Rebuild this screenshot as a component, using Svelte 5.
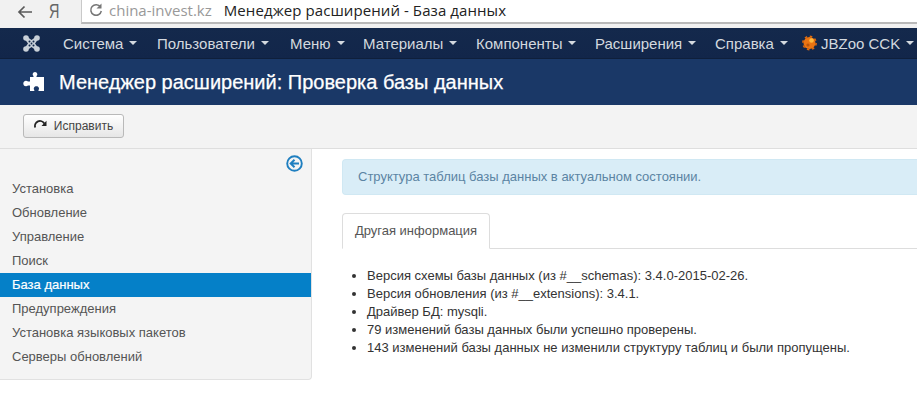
<script>
  const navItems = [
    { label: 'Система', width: 94 },
    { label: 'Пользователи', width: 133 },
    { label: 'Меню', width: 73 },
    { label: 'Материалы', width: 113 },
    { label: 'Компоненты', width: 119 },
    { label: 'Расширения', width: 120 },
    { label: 'Справка', width: 87 }
  ];
  const sideItems = ['Установка', 'Обновление', 'Управление', 'Поиск', 'База данных', 'Предупреждения', 'Установка языковых пакетов', 'Серверы обновлений'];
  const info = [
    'Версия схемы базы данных (из #__schemas): 3.4.0-2015-02-26.',
    'Версия обновления (из #__extensions): 3.4.1.',
    'Драйвер БД: mysqli.',
    '79 изменений базы данных были успешно проверены.',
    '143 изменений базы данных не изменили структуру таблиц и были пропущены.'
  ];
</script>

<div class="page">
  <div class="browser">
    <div class="browser-left">
      <svg class="back" width="16" height="14" viewBox="0 0 16 14"><path d="M15 7H2M7.500 1.500 2 7l5.500 5.500" fill="none" stroke="#5a5a5a" stroke-width="1.700"/></svg>
      <span class="ya">Я</span>
    </div>
    <div class="url">
      <svg class="reload" width="14" height="14" viewBox="0 0 14 14"><path d="M11.500 4A5.300 5.300 0 1 0 12.300 8" fill="none" stroke="#777" stroke-width="1.500"/><path d="M12.500 .5V5.500H7.500z" fill="#777"/></svg>
      <span class="host">china-invest.kz</span>
      <span class="doc-title">Менеджер расширений - База данных</span>
    </div>
  </div>

  <nav class="nav">
    <svg class="logo" width="17" height="17" viewBox="0 0 17 17">
      <g fill="#c9d0d8">
        <circle cx="3" cy="3" r="2.800"/><circle cx="14" cy="3" r="2.800"/><circle cx="3" cy="14" r="2.800"/><circle cx="14" cy="14" r="2.800"/>
        <path d="M3 1 8.500 5 14 1 16 3 12 8.500 16 14 14 16 8.500 12 3 16 1 14 5 8.500 1 3Z"/>
      </g>
      <g fill="#13294a">
        <circle cx="6.500" cy="6.500" r="1"/><circle cx="10.500" cy="6.500" r="1"/><circle cx="6.500" cy="10.500" r="1"/><circle cx="10.500" cy="10.500" r="1"/><circle cx="8.500" cy="8.500" r=".9"/>
      </g>
    </svg>
    <ul class="menu">
      {#each navItems as item}
        <li class="menu-item" style="width:{item.width}px"><span>{item.label}</span><i class="caret"></i></li>
      {/each}
      <li class="menu-item zoo">
        <svg width="15" height="16" viewBox="0 0 15 16">
          <circle cx="7.500" cy="8" r="6" fill="#ea7412"/>
          <circle cx="7.500" cy="8" r="6.600" fill="none" stroke="#e06a0c" stroke-width="1.600" stroke-dasharray="2.500 2.700"/>
          <circle cx="9.500" cy="5.500" r="2.300" fill="#ffb93d"/>
          <circle cx="6" cy="10" r="1.600" fill="#b9540c"/>
        </svg>
        <span>JBZoo CCK</span><i class="caret"></i>
      </li>
    </ul>
  </nav>

  <header class="title-bar">
    <svg width="21" height="21" viewBox="0 0 21 21"><path fill="#fff" d="M7 5H10.500V4C9.800 3.400 9.600 2.800 9.700 2 9.900.8 10.900 0 12 0 13.100 0 14.100.8 14.300 2 14.400 2.800 14.200 3.400 13.500 4V5H21V19H15.500V18C16 17.300 16.200 16.500 15.800 15.700 15.300 14.800 14.400 14.300 13.400 14.300 12.400 14.300 11.500 14.800 11 15.700 10.600 16.500 10.800 17.300 11.300 18V19H7V13.500H5C4.400 14.100 3.800 14.300 3 14.300 1.300 14.100 .3 13 .3 11.500 .3 10 1.300 8.900 3 8.700 3.800 8.700 4.400 8.900 5 9.500H7Z"/></svg>
    <h1>Менеджер расширений: Проверка базы данных</h1>
  </header>

  <div class="toolbar">
    <button class="fix">
      <svg width="13" height="12" viewBox="0 0 13 12"><path d="M10.300 3.500A5 5 0 0 0 1.200 7.500" fill="none" stroke="#222" stroke-width="1.800"/><path d="M12.500 .8V6H7.500z" fill="#222"/></svg>
      Исправить
    </button>
  </div>

  <div class="body">
    <aside class="side">
      <div class="side-top">
        <svg width="17" height="17" viewBox="0 0 17 17"><circle cx="8.500" cy="8.500" r="7.300" fill="none" stroke="#1f7fc0" stroke-width="1.900"/><path d="M13 8.500H5M8.500 4.700 4.700 8.500l3.800 3.800" fill="none" stroke="#1f7fc0" stroke-width="2"/></svg>
      </div>
      <ul class="side-list">
        {#each sideItems as item, i}
          <li class:active={i === 4}>{item}</li>
        {/each}
      </ul>
    </aside>

    <main class="content">
      <div class="alert">Структура таблиц базы данных в актуальном состоянии.</div>
      <div class="tabs"><div class="tab">Другая информация</div></div>
      <ul class="info">
        {#each info as line}
          <li>{line}</li>
        {/each}
      </ul>
    </main>
  </div>
</div>

<style>
  :global(body) { margin: 0; background: #fff; }
  .page { width: 917px; height: 404px; overflow: hidden; font-family: "Liberation Sans", Arial, sans-serif; font-size: 13px; color: #333; }
  ul { list-style: none; margin: 0; padding: 0; }

  .browser { height: 28px; display: flex; background: #f1f1f1; }
  .browser-left { width: 81px; display: flex; align-items: center; padding: 0 0 5px 17px; box-sizing: border-box; flex: none; }
  .ya { margin-left: 16px; font-size: 20px; color: #666; transform: scaleX(.72); transform-origin: left center; }
  .url { flex: 1; height: 24px; box-sizing: border-box; background: #fff; border-left: 1px solid #c9c9c9; border-bottom: 2px solid #b9b9b9; display: flex; align-items: center; padding: 0 0 2px 7px; font-family: "Open Sans", sans-serif; font-size: 15px; }
  .reload { margin-right: 6px; flex: none; }
  .host { color: #999; margin-right: 12px; }
  .doc-title { color: #222; letter-spacing: .08px; }

  .nav { height: 30px; background: linear-gradient(#14294c, #12264a); border-bottom: 1px solid #0f1f3b; display: flex; align-items: center; padding-left: 23px; }
  .logo { flex: none; margin-right: 23px; }
  .menu { display: flex; font-size: 15px; color: #d4d9df; white-space: nowrap; }
  .menu-item { display: flex; align-items: center; flex: none; }
  .caret { width: 0; height: 0; margin-left: 6px; border-left: 4px solid transparent; border-right: 4px solid transparent; border-top: 4px solid #d4d9df; }
  .zoo svg { margin-right: 4px; }

  .title-bar { height: 46px; background: #1a3867; display: flex; align-items: center; padding-left: 23px; color: #fff; }
  .title-bar h1 { margin: 0 0 0 15px; font-size: 20px; font-weight: 400; -webkit-text-stroke: .25px #fff; white-space: nowrap; }

  .toolbar { height: 43px; background: #f3f3f3; border-bottom: 1px solid #dedede; display: flex; align-items: center; padding-left: 23px; }
  .fix { width: 101px; height: 24px; margin-top: -1px; box-sizing: border-box; padding: 0; display: flex; align-items: center; justify-content: center; gap: 7px; border: 1px solid #b9b9b9; border-radius: 3px; background: linear-gradient(#fff, #e6e6e6); font: 12px "Liberation Sans", sans-serif; color: #444; }

  .body { display: flex; align-items: flex-start; }
  .side { width: 312px; height: 231px; box-sizing: border-box; flex: none; background: #f4f4f4; border-right: 1px solid #e1e1e1; border-bottom: 1px solid #e1e1e1; border-bottom-right-radius: 4px; }
  .side-top { height: 28px; display: flex; justify-content: flex-end; align-items: flex-start; padding: 6px 8px 0 0; box-sizing: border-box; }
  .side-list li { height: 24px; line-height: 24px; padding-left: 12px; color: #555; }
  .side-list li.active { background: #0580c8; color: #fff; -webkit-text-stroke: .2px #fff; }

  .content { flex: 1; padding: 10px 0 0 30px; min-width: 0; }
  .alert { height: 36px; line-height: 34px; box-sizing: border-box; padding-left: 15px; background: #d9edf7; border: 1px solid #d0e8f3; border-right: 0; border-radius: 4px 0 0 4px; color: #5b84a3; }
  .tabs { margin-top: 18px; height: 36px; box-sizing: border-box; border-bottom: 1px solid #ddd; }
  .tab { width: 148px; height: 36px; box-sizing: border-box; line-height: 34px; text-align: center; background: #fff; border: 1px solid #ddd; border-bottom-color: #fff; border-radius: 4px 4px 0 0; color: #555; }
  .info { list-style: disc; margin: 18px 0 0; padding-left: 25px; color: #333; }
  .info li { line-height: 18px; white-space: nowrap; }
</style>
